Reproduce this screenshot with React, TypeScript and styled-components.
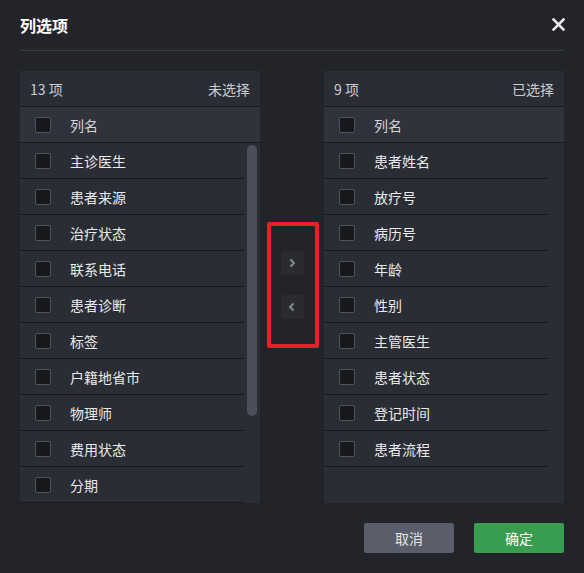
import React from "react";
import styled, { createGlobalStyle } from "styled-components";

const Global = createGlobalStyle`
  html, body { margin: 0; padding: 0; background: #222429; }
  body { font-family: "Noto Sans CJK SC", "Noto Sans", sans-serif; }
  * { box-sizing: border-box; }
`;

const Dialog = styled.div`
  width: 584px;
  height: 573px;
  background: #222429;
  padding: 0 20px;
  display: flex;
  flex-direction: column;
`;

const Header = styled.div`
  height: 51px;
  border-bottom: 1px solid #3a3d44;
  display: flex;
  align-items: center;
  justify-content: space-between;
  padding-bottom: 1px;
`;

const Title = styled.div`
  font-size: 16px;
  font-weight: 700;
  color: #ffffff;
  line-height: 20px;
`;

const Close = styled.button`
  width: 14px;
  height: 14px;
  padding: 0;
  margin-right: -1px;
  border: none;
  background: transparent;
  display: flex;
  align-items: center;
  justify-content: center;
  cursor: pointer;
`;

const Main = styled.div`
  margin-top: 20px;
  display: flex;
  align-items: stretch;
  height: 432px;
`;

const Panel = styled.div`
  width: 240px;
  background: #2a2d34;
  display: flex;
  flex-direction: column;
`;

const PanelHead = styled.div`
  height: 36px;
  border-bottom: 1px solid #18191d;
  display: flex;
  align-items: center;
  justify-content: space-between;
  padding: 0 10px;
  font-size: 14px;
  color: #c9ccd3;
`;

const ColHead = styled.div`
  height: 36px;
  background: #30333c;
  border-bottom: 1px solid #18191d;
  display: flex;
  align-items: center;
  padding-left: 15px;
  font-size: 14px;
  color: #d2d3d6;
`;

const List = styled.div`
  flex: 1;
  display: flex;
  min-height: 0;
`;

const Rows = styled.div`
  flex: 1;
  overflow: hidden;
`;

const Rail = styled.div`
  width: 16px;
  flex: none;
  padding: 2px 3px;
`;

const Thumb = styled.div`
  width: 10px;
  background: #4c4f5a;
  border-radius: 5px;
`;

const Row = styled.div`
  height: 36px;
  border-bottom: 1px solid #18191d;
  display: flex;
  align-items: center;
  padding-left: 15px;
  font-size: 14px;
  color: #e9eaec;
`;

const Check = styled.span`
  width: 16px;
  height: 16px;
  border: 1px solid #50535c;
  border-radius: 2px;
  background: #18191d;
  margin-right: 19px;
  flex: none;
`;

const Middle = styled.div`
  flex: 1;
  display: flex;
  align-items: center;
  justify-content: center;
  padding-left: 1px;
  padding-bottom: 4px;
`;

const Marker = styled.div`
  border: 4px solid #e8202a;
  border-radius: 2px;
  padding: 25px 11px 25px 10px;
  display: flex;
  flex-direction: column;
  gap: 20px;
`;

const Arrow = styled.button`
  width: 23px;
  height: 24px;
  border: none;
  padding: 0;
  background: #292b31;
  border-radius: 2px;
  display: flex;
  align-items: center;
  justify-content: center;
  cursor: pointer;
`;

const Footer = styled.div`
  margin-top: 20px;
  display: flex;
  justify-content: flex-end;
  gap: 20px;
`;

const Btn = styled.button<{ $primary?: boolean }>`
  width: 90px;
  height: 30px;
  border: none;
  border-radius: 2px;
  font-family: inherit;
  font-size: 14px;
  color: ${(p) => (p.$primary ? "#ffffff" : "#e2e3e6")};
  background: ${(p) => (p.$primary ? "#389d4f" : "#5a5d6a")};
  cursor: pointer;
`;

const left = ["主诊医生", "患者来源", "治疗状态", "联系电话", "患者诊断", "标签", "户籍地省市", "物理师", "费用状态", "分期"];
const right = ["患者姓名", "放疗号", "病历号", "年龄", "性别", "主管医生", "患者状态", "登记时间", "患者流程"];

const Chevron = ({ dir }: { dir: "left" | "right" }) => (
  <svg width="8" height="10" viewBox="0 0 8 10">
    <path
      d={dir === "right" ? "M2.5 1.5 L6 5 L2.5 8.5" : "M5.5 1.5 L2 5 L5.5 8.5"}
      fill="none"
      stroke="#8b8d93"
      strokeWidth="1.8"
    />
  </svg>
);

const VISIBLE = 10;
const RAIL = 356;

const Transfer = ({ count, label, items }: { count: number; label: string; items: string[] }) => {
  const scrolls = count > VISIBLE;
  return (
    <Panel>
      <PanelHead>
        <span>{count} 项</span>
        <span>{label}</span>
      </PanelHead>
      <ColHead>
        <Check />
        列名
      </ColHead>
      <List>
        <Rows>
          {items.map((t) => (
            <Row key={t}>
              <Check />
              {t}
            </Row>
          ))}
        </Rows>
        <Rail>
          {scrolls && <Thumb style={{ height: Math.round((RAIL * VISIBLE) / count) - 3 }} />}
        </Rail>
      </List>
    </Panel>
  );
};

export default function App() {
  return (
    <>
      <Global />
      <Dialog>
        <Header>
          <Title>列选项</Title>
          <Close aria-label="close">
            <svg width="13" height="13" viewBox="0 0 13 13">
              <path d="M1.5 1.5 L11.5 11.5 M11.5 1.5 L1.5 11.5" stroke="#e8e8ea" strokeWidth="2.6" strokeLinecap="square" />
            </svg>
          </Close>
        </Header>
        <Main>
          <Transfer count={13} label="未选择" items={left} />
          <Middle>
            <Marker>
              <Arrow><Chevron dir="right" /></Arrow>
              <Arrow><Chevron dir="left" /></Arrow>
            </Marker>
          </Middle>
          <Transfer count={9} label="已选择" items={right} />
        </Main>
        <Footer>
          <Btn>取消</Btn>
          <Btn $primary>确定</Btn>
        </Footer>
      </Dialog>
    </>
  );
}
